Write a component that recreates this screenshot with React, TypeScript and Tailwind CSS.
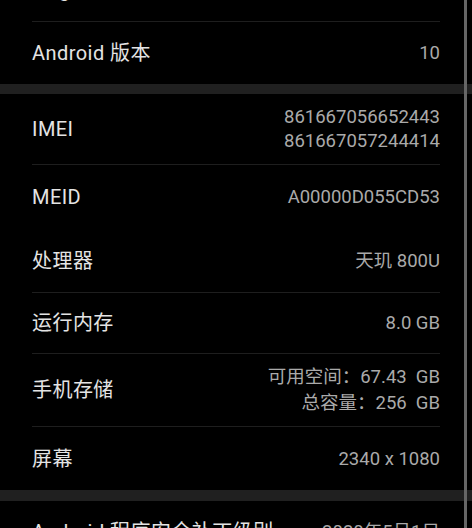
import React from "react";

const font = { fontFamily: "Roboto, 'Noto Sans CJK SC', sans-serif" };

function Divider() {
  return <div className="h-px mx-[32px] bg-[#1e1e1e]" />;
}

function Band({ h }: { h: string }) {
  return <div className={`${h} bg-[#202020]`} />;
}

function Row({
  label,
  values,
  h,
  lh = "leading-[24px]",
  extra = "",
}: {
  label: string;
  values: string[];
  h: string;
  lh?: string;
  extra?: string;
}) {
  return (
    <div className={`flex items-center justify-between px-[32px] ${h} ${extra}`}>
      <div className="text-[20px] text-[#e4e4e4] leading-none tracking-[0.45px]">{label}</div>
      <div className={`flex flex-col items-end text-[18.5px] text-[#aaaaaa] ${lh}`}>
        {values.map((v, i) => (
          <div key={i} className="whitespace-pre">
            {v}
          </div>
        ))}
      </div>
    </div>
  );
}

export default function App() {
  return (
    <div className="relative w-[472px] h-[528px] overflow-hidden bg-black" style={font}>
      <div className="flex flex-col">
        <Row label="Origin OS 版本" values={["1.0"]} h="h-[62px]" extra="mt-[-41px]" />
        <Divider />
        <Row label="Android 版本" values={["10"]} h="h-[62px]" />
        <Band h="h-[10px]" />
        <Row label="IMEI" values={["861667056652443", "861667057244414"]} h="h-[70px]" />
        <Divider />
        <Row label="MEID" values={["A00000D055CD53"]} h="h-[64px]" />
        <Row label="处理器" values={["天玑 800U"]} h="h-[63px]" />
        <Divider />
        <Row label="运行内存" values={["8.0 GB"]} h="h-[60px]" />
        <Divider />
        <Row
          label="手机存储"
          values={["可用空间：67.43  GB", "总容量：256  GB"]}
          h="h-[72px]"
          lh="leading-[26px]"
        />
        <Divider />
        <Row label="屏幕" values={["2340 x 1080"]} h="h-[63px]" />
        <Band h="h-[11px]" />
        <Row label="Android 程序安全补丁级别" values={["2020年5月1日"]} h="h-[62px]" />
      </div>
      <div className="absolute top-0 bottom-0 left-[464px] w-[3px] bg-[#666666]" />
    </div>
  );
}
